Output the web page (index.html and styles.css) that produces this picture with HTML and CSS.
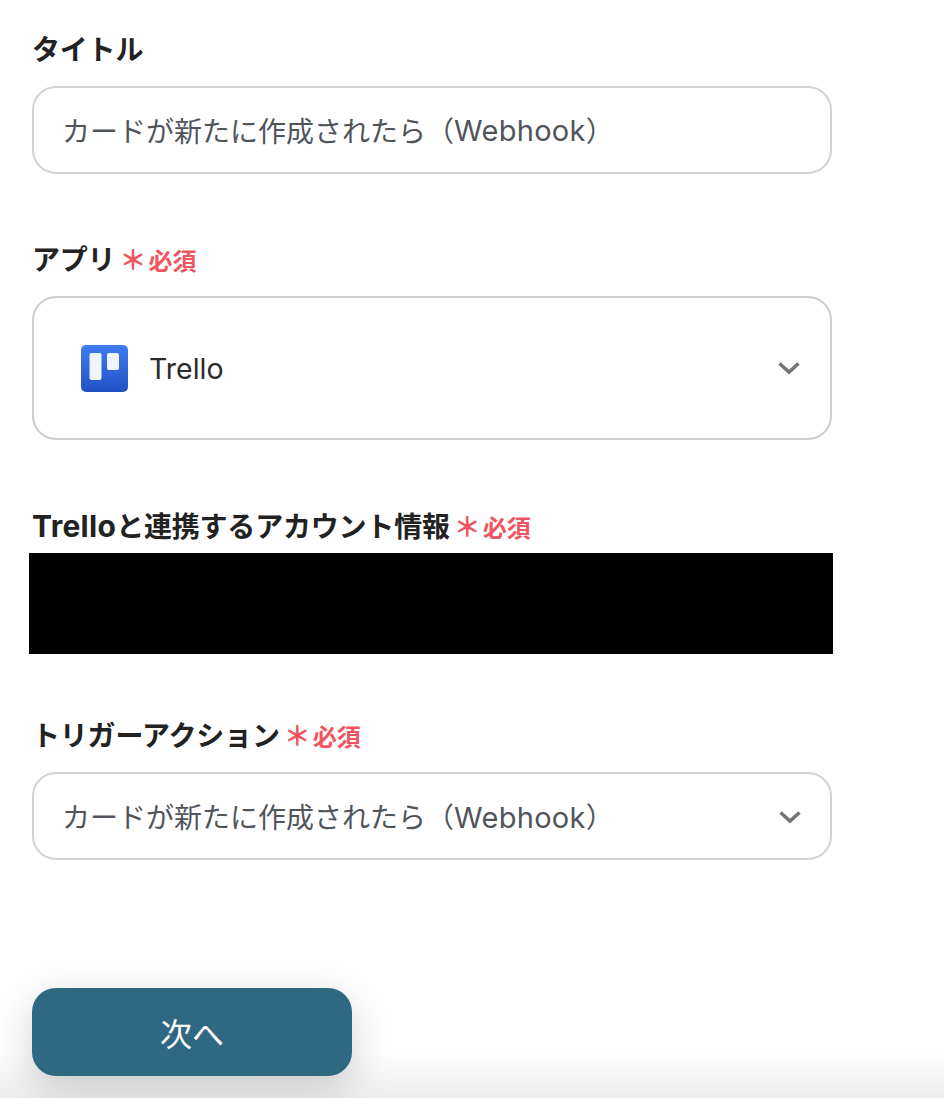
FILE: index.html
```html
<!DOCTYPE html>
<html lang="ja">
<head>
    <meta charset="UTF-8">
    <meta name="viewport" content="width=device-width, initial-scale=1.0">
    <title>トリガー設定</title>
    <link rel="stylesheet" href="styles.css">
</head>
<body>
    <div class="form">
        <div class="field field-title">
            <div class="label">タイトル</div>
            <div class="input">カードが新たに作成されたら（<span class="latin">Webhook</span>）</div>
        </div>

        <div class="field field-app">
            <div class="label">アプリ<span class="required"><span class="mark">＊</span>必須</span></div>
            <div class="input input-app">
                <svg class="app-icon" viewBox="0 0 47 47">
                    <defs>
                        <linearGradient id="trello-bg" x1="0" y1="0" x2="0" y2="1">
                            <stop offset="0" stop-color="#3f7df0"/>
                            <stop offset="1" stop-color="#2250c4"/>
                        </linearGradient>
                    </defs>
                    <rect width="47" height="47" rx="5" fill="url(#trello-bg)"/>
                    <rect x="8.500" y="8" width="12" height="27" rx="2" fill="#f0f5fd"/>
                    <rect x="26" y="8" width="12" height="17" rx="2" fill="#f0f5fd"/>
                </svg>
                <span class="app-name">Trello</span>
                <svg class="chevron" viewBox="0 0 24 14"><path d="M2.5 2.5 12 11l9.5-8.500" fill="none" stroke="#757575" stroke-width="3.600"/></svg>
            </div>
        </div>

        <div class="field field-account">
            <div class="label"><span class="latin">Trello</span>と連携するアカウント情報<span class="required"><span class="mark">＊</span>必須</span></div>
            <div class="redacted"></div>
        </div>

        <div class="field field-action">
            <div class="label">トリガーアクション<span class="required"><span class="mark">＊</span>必須</span></div>
            <div class="input input-select">
                <span>カードが新たに作成されたら（<span class="latin">Webhook</span>）</span>
                <svg class="chevron" viewBox="0 0 24 14"><path d="M2.5 2.5 12 11l9.5-8.500" fill="none" stroke="#757575" stroke-width="3.600"/></svg>
            </div>
        </div>

        <button class="next">次へ</button>
    </div>
</body>
</html>
```

FILE: styles.css
```css
html,
body {
    height: 100%;
}

body {
    margin: 0;
    font-family: Inter, "Noto Sans CJK JP", sans-serif;
    color: #222;
    background: linear-gradient(to bottom, #fff 1050px, #eceded 1098px);
    overflow: hidden;
}

.form {
    width: 800px;
    padding: 30px 0 0 32px;
}

.field {
    display: flex;
    flex-direction: column;
}

.field-app {
    margin-top: 66px;
}

.field-account {
    margin-top: 66px;
}

.field-action {
    margin-top: 62px;
}

.label {
    height: 40px;
    line-height: 40px;
    font-size: 28px;
    font-weight: 700;
    letter-spacing: -0.2px;
    color: #222;
    white-space: nowrap;
}

.latin {
    font-size: 30px;
    letter-spacing: 0.3px;
}

.input .latin {
    font-size: 29px;
    letter-spacing: 0.3px;
}

.required {
    margin-left: 6px;
    font-size: 24px;
    letter-spacing: 0;
    color: #ef5561;
}

.mark {
    display: inline-block;
    width: 24px;
    margin-right: 3px;
    font-size: 27px;
    line-height: 24px;
    text-indent: -2px;
}

.input {
    box-sizing: border-box;
    height: 88px;
    margin-top: 16px;
    padding: 0 28px;
    display: flex;
    align-items: center;
    border: 2px solid #cfd3d6;
    border-radius: 24px;
    background: #fff;
    font-size: 28px;
    color: #50555c;
    white-space: nowrap;
}

.input-app {
    height: 144px;
    padding: 0 29px 0 47px;
    border-color: #cdcdcd;
}

.input-select {
    justify-content: space-between;
}

.input-select .chevron {
    margin-top: 2px;
}

.app-icon {
    width: 47px;
    height: 47px;
    flex-shrink: 0;
}

.app-name {
    margin-left: 21px;
    font-size: 28.500px;
    color: #2b2b2b;
}

.chevron {
    width: 24px;
    height: 14px;
    flex-shrink: 0;
}

.input-app .chevron {
    margin-left: auto;
}

.redacted {
    height: 101px;
    margin: 7px -1px 0 -3px;
    background: #000;
}

.next {
    display: block;
    width: 320px;
    height: 88px;
    margin-top: 128px;
    border: none;
    border-radius: 24px;
    background: #2f6881;
    color: #fff;
    font-family: inherit;
    font-size: 32px;
    box-shadow: 0 12px 40px rgba(0, 0, 0, 0.18);
}
```
